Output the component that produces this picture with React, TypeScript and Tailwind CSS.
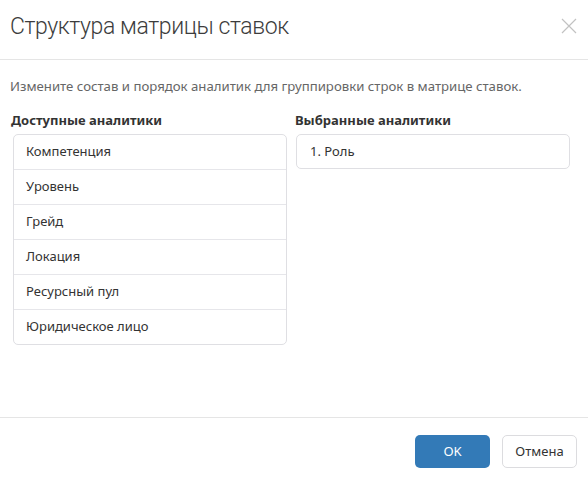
import React from 'react';

const available = ['Компетенция', 'Уровень', 'Грейд', 'Локация', 'Ресурсный пул', 'Юридическое лицо'];
const selected = ['1. Роль'];

export default function App() {
  return (
    <div className="w-[588px] h-[480px] bg-white flex flex-col font-['Noto_Sans',sans-serif] text-[#333]">
      {/* Header */}
      <div className="h-[60px] shrink-0 border-b border-[#e5e5e5] flex items-center justify-between pl-[10px] pr-[10px]">
        <h1 className="font-['Roboto',sans-serif] text-[23px] tracking-[-0.4px] font-light text-[#3c3c3c] leading-none -mt-[6px]">Структура матрицы ставок</h1>
        <button className="w-[16px] h-[16px] mr-[1px] -mt-[8px] flex items-center justify-center">
          <svg width="16" height="16" viewBox="0 0 16 16">
            <path d="M1 1L15 15M15 1L1 15" stroke="#c2c2c2" strokeWidth="1.2" />
          </svg>
        </button>
      </div>

      {/* Body */}
      <div className="flex-1 px-[10px] pt-[17px]">
        <p className="text-[13.2px] text-[#666] leading-[18px]">
          Измените состав и порядок аналитик для группировки строк в матрице ставок.
        </p>
        <div className="flex mt-[16px]">
          <div className="w-[284px]">
            <div className="text-[13px] font-bold text-[#333] leading-[18px] pl-[1px]">Доступные аналитики</div>
            <ul className="mt-[5px] ml-[3px] border border-[#dfdfe3] rounded-[5px] w-[274px]">
              {available.map((a, i) => (
                <li
                  key={a}
                  className={`flex items-center px-[12px] text-[13px] text-[#333] ${i > 0 ? 'h-[35px] border-t border-[#e6e6ea]' : 'h-[34px]'}`}
                >
                  {a}
                </li>
              ))}
            </ul>
          </div>
          <div className="flex-1">
            <div className="text-[13px] font-bold text-[#333] leading-[18px] pl-[1px]">Выбранные аналитики</div>
            <ul className="mt-[5px] ml-[2px] border border-[#dfdfe3] rounded-[5px] w-[274px]">
              {selected.map((a) => (
                <li key={a} className="h-[33px] flex items-center px-[13px] text-[13px] text-[#333]">
                  {a}
                </li>
              ))}
            </ul>
          </div>
        </div>
      </div>

      {/* Footer */}
      <div className="h-[63px] shrink-0 border-t border-[#e5e5e5] flex justify-end items-start gap-[12px] pt-[17px] pr-[11px]">
        <button className="w-[75px] h-[33px] rounded-[5px] bg-[#337ab7] text-white text-[13px]">OK</button>
        <button className="w-[75px] h-[33px] rounded-[5px] bg-white border border-[#dcdcdf] text-[#333] text-[13px]">Отмена</button>
      </div>
    </div>
  );
}
